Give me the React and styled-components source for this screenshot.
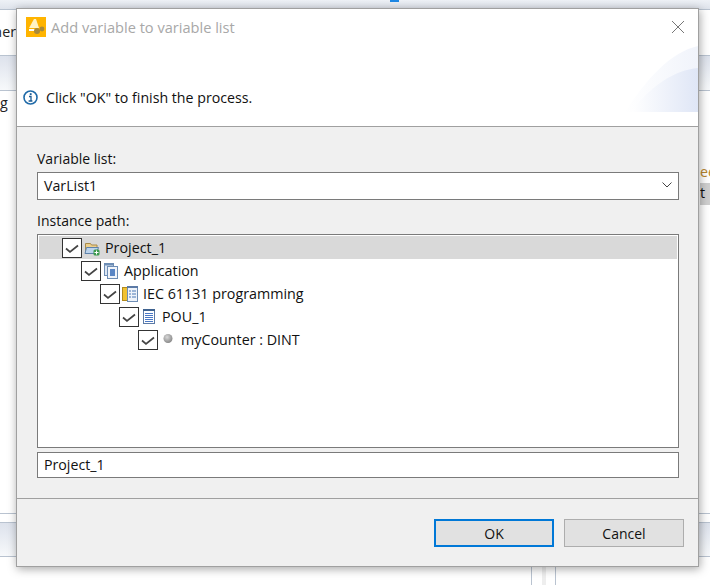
import React from 'react';
import styled, { createGlobalStyle } from 'styled-components';

const GlobalStyle = createGlobalStyle`
  * { box-sizing: border-box; }
  html, body { margin: 0; padding: 0; height: 100%; }
  body { font-family: "Open Sans", "Noto Sans", sans-serif; background: #fff; overflow: hidden; }
`;

const Desktop = styled.div`
  position: relative;
  width: 710px;
  height: 585px;
  overflow: hidden;
  background: #fff;
  display: flex;
  flex-direction: column;
`;

const TopStrip = styled.div`
  position: relative;
  height: 10px;
  flex: none;
  background: linear-gradient(#eef1f6, #dfe4ec);
  border-bottom: 1px solid #b9c3d0;
`;

const Tick = styled.div`
  position: absolute;
  left: 390px;
  top: 0;
  width: 9px;
  height: 2px;
  background: #1e88e5;
`;

const BackRow = styled.div`
  height: ${p => p.$h}px;
  flex: none;
  border-bottom: 1px solid #b9c3d0;
  background: ${p => (p.$tint ? 'linear-gradient(#dde2ec, #f7f9fb)' : '#fff')};
`;

const LeftText = styled.div`
  width: 16px;
  padding-top: 12px;
  display: flex;
  justify-content: flex-end;
  font-size: 14.3px;
  line-height: 20px;
  color: #222;
  white-space: nowrap;
  overflow: hidden;
`;

const BackMiddle = styled.div`
  flex: 1;
  display: flex;
  justify-content: space-between;
  border-bottom: 1px solid #b9c3d0;
`;

const SideLabel = styled.div`
  width: 16px;
  padding-top: 2px;
  font-size: 14.3px;
  line-height: 20px;
  color: #222;
`;

const RightFragments = styled.div`
  width: 10px;
  padding-top: 71px;
  font-size: 14.3px;
  line-height: 20px;
  overflow: hidden;
`;

const OrangeText = styled.div`
  color: #b8862f;
`;

const GreyChip = styled.div`
  height: 22px;
  margin-top: 1px;
  background: #cfcfcf;
  color: #111;
`;

const BackBottom = styled.div`
  height: 28px;
  flex: none;
  display: flex;
  padding-left: 531px;
`;

const Rail = styled.div`
  width: 25px;
  border-left: 1px solid #b9c3d0;
  border-right: 1px solid #b9c3d0;
  display: flex;
  justify-content: center;
`;

const RailGap = styled.div`
  width: 4px;
  background: #eeeeee;
`;

const Dialog = styled.div`
  position: absolute;
  left: 16px;
  top: 8px;
  width: 683px;
  height: 559px;
  border: 1px solid #a0a0a0;
  box-shadow: 1px 2px 9px rgba(0, 0, 0, 0.35);
  display: flex;
  flex-direction: column;
  background: #f0f0f0;
`;

const Header = styled.div`
  position: relative;
  height: 118px;
  flex: none;
  background: #fff;
  border-bottom: 1px solid #a0a0a0;
  overflow: hidden;
`;

const TitleBar = styled.div`
  display: flex;
  align-items: center;
  height: 28px;
  padding: 8px 0 0 9px;
  gap: 5px;
`;

const Title = styled.span`
  font-size: 14.6px;
  line-height: 20px;
  color: #a8a8a8;
`;

const CloseButton = styled.div`
  position: absolute;
  right: 13px;
  top: 11px;
  width: 14px;
  height: 14px;
  display: flex;
  color: #777;
`;

const Message = styled.div`
  display: flex;
  align-items: center;
  gap: 8px;
  margin: 50px 0 0 6px;
  height: 20px;
  font-size: 14.2px;
  color: #111;
`;

const Swoosh = styled.svg`
  position: absolute;
  right: 0;
  bottom: 14px;
`;

const Body = styled.div`
  flex: 1;
  padding: 24px 19px 0 20px;
  display: flex;
  flex-direction: column;
`;

const Label = styled.div`
  font-size: 14px;
  line-height: 16px;
  color: #111;
  margin-bottom: 5px;
`;

const Combo = styled.div`
  height: 28px;
  flex: none;
  border: 1px solid #7a7a7a;
  background: #fff;
  display: flex;
  align-items: center;
  justify-content: space-between;
  padding: 0 6px 2px 6px;
  font-size: 14.2px;
  color: #111;
  margin-bottom: 13px;
`;

const Tree = styled.div`
  height: 214px;
  flex: none;
  border: 1px solid #7a7a7a;
  background: #fff;
  padding: 1px;
  margin-bottom: 4px;
`;

const Row = styled.div`
  display: flex;
  align-items: center;
  height: 23px;
  padding-left: ${p => 23 + p.$level * 19}px;
  background: ${p => (p.$selected ? '#d9d9d9' : 'transparent')};
  font-size: 14.3px;
  color: #111;
`;

const Check = styled.span`
  width: 20px;
  height: 20px;
  border: 1px solid #333;
  background: #fff;
  flex: none;
  margin-right: 2px;
  display: flex;
  align-items: center;
  justify-content: center;
`;

const RowIcon = styled.svg`
  flex: none;
  margin-right: 5px;
`;

const PathField = styled.div`
  height: 26px;
  flex: none;
  border: 1px solid #7a7a7a;
  background: #fff;
  padding: 0 6px;
  font-size: 14.2px;
  line-height: 24px;
  color: #111;
`;

const Footer = styled.div`
  height: 68px;
  flex: none;
  border-top: 1px solid #a0a0a0;
  display: flex;
  justify-content: flex-end;
  gap: 10px;
  padding: 20px 14px 0 0;
`;

const Button = styled.button`
  width: 120px;
  height: 28px;
  background: #e1e1e1;
  border: ${p => (p.$primary ? '2px solid #0078d7' : '1px solid #adadad')};
  font-family: inherit;
  font-size: 14px;
  color: #111;
  padding: 0;
`;

const CheckMark = () => (
  <svg width="18" height="18" viewBox="0 0 18 18">
    <path d="M3 9.500l4 3.500 8-6.500" fill="none" stroke="#444" strokeWidth="1.700" />
  </svg>
);

const FolderIcon = () => (
  <RowIcon width="16" height="16" viewBox="0 0 16 16">
    <path d="M1.500 3.500h5l1 1.500h5.500v8h-11.500z" fill="#eccf8c" stroke="#a88a4a" />
    <path d="M2.500 7.500h12l-2 6h-11.500z" fill="#bcd3ec" stroke="#5f83ab" />
    <rect x="9.500" y="9.500" width="6" height="6" rx="1.500" fill="#3d9a4e" />
    <path d="M12.500 10.500v4M10.500 12.500h4" stroke="#fff" />
  </RowIcon>
);

const AppIcon = () => (
  <RowIcon width="16" height="16" viewBox="0 0 16 16">
    <rect x="1.500" y="0.500" width="9" height="12" fill="#dce6f3" stroke="#6d8db5" />
    <rect x="1.500" y="0.500" width="9" height="2" fill="#6d8db5" />
    <rect x="4.500" y="3.500" width="10" height="12" fill="#f0f4fa" stroke="#6d8db5" />
    <rect x="7" y="6" width="5" height="7" fill="#5a86c5" />
  </RowIcon>
);

const ProgrammingIcon = () => (
  <RowIcon width="16" height="16" viewBox="0 0 16 16">
    <rect x="0.500" y="1.500" width="8" height="13" fill="#f1c232" stroke="#b28a1c" />
    <rect x="5.500" y="0.500" width="10" height="15" fill="#eef3fa" stroke="#6d8db5" />
    <rect x="5" y="0" width="11" height="2" fill="#5b7aa6" />
    <path d="M7 5h2M10 5h4M7 8h2M10 8h4M7 11h2M10 11h4" stroke="#4a78b5" />
  </RowIcon>
);

const PouIcon = () => (
  <RowIcon width="16" height="16" viewBox="0 0 16 16">
    <rect x="2.500" y="0.500" width="11" height="14" fill="#fff" stroke="#5b7aa6" />
    <rect x="2" y="0" width="12" height="2" fill="#3f628f" />
    <path d="M4 4.500h8M4 6.500h8M4 8.500h8M4 10.500h8M4 12.500h8" stroke="#4a78c5" />
  </RowIcon>
);

const DotIcon = () => (
  <RowIcon width="16" height="16" viewBox="0 0 16 16">
    <defs>
      <radialGradient id="dot" cx="40%" cy="35%" r="65%">
        <stop offset="0%" stopColor="#d8d8d8" />
        <stop offset="100%" stopColor="#8a8a8a" />
      </radialGradient>
    </defs>
    <circle cx="8" cy="6.500" r="4.500" fill="url(#dot)" />
  </RowIcon>
);

const rows = [
  { level: 0, label: 'Project_1', icon: <FolderIcon />, selected: true },
  { level: 1, label: 'Application', icon: <AppIcon /> },
  { level: 2, label: 'IEC 61131 programming', icon: <ProgrammingIcon /> },
  { level: 3, label: 'POU_1', icon: <PouIcon /> },
  { level: 4, label: 'myCounter : DINT', icon: <DotIcon /> },
];

export default function App() {
  return (
    <Desktop>
      <GlobalStyle />
      <TopStrip><Tick /></TopStrip>
      <BackRow $h={46}><LeftText>her</LeftText></BackRow>
      <BackRow $h={35} $tint />
      <BackMiddle>
        <SideLabel>g</SideLabel>
        <RightFragments>
          <OrangeText>ee</OrangeText>
          <GreyChip>t</GreyChip>
        </RightFragments>
      </BackMiddle>
      <BackRow $h={9} />
      <BackRow $h={34} $tint />
      <BackBottom>
        <Rail><RailGap /></Rail>
      </BackBottom>

      <Dialog>
        <Header>
          <TitleBar>
            <svg width="20" height="20" viewBox="0 0 20 20">
              <rect width="20" height="20" fill="#ffb400" />
              <path d="M8 2h2l3 9H3z" fill="#fff3c4" />
              <path d="M3 12h8v2H3z" fill="#fff" />
              <circle cx="11" cy="14" r="3" fill="#a98a3a" />
              <circle cx="16" cy="12" r="2.400" fill="#a98a3a" />
            </svg>
            <Title>Add variable to variable list</Title>
          </TitleBar>
          <CloseButton>
            <svg width="14" height="14" viewBox="0 0 14 14">
              <path d="M1 1l12 12M13 1L1 13" stroke="currentColor" fill="none" />
            </svg>
          </CloseButton>
          <Message>
            <svg width="15" height="15" viewBox="0 0 15 15">
              <circle cx="7.500" cy="7.500" r="6.500" fill="#fff" stroke="#1f6aa8" strokeWidth="1.600" />
              <path d="M6 6.500h2v4.300M5.600 11h3.800" stroke="#1c5c94" strokeWidth="1.300" fill="none" />
              <rect x="6.800" y="3.200" width="1.800" height="1.800" fill="#1c5c94" />
            </svg>
            <span>Click "OK" to finish the process.</span>
          </Message>
          <Swoosh width="73" height="66" viewBox="0 0 73 66">
            <defs>
              <linearGradient id="sw" x1="0" x2="1" y1="0" y2="0">
                <stop offset="0%" stopColor="#fff" />
                <stop offset="100%" stopColor="#dfe6f6" />
              </linearGradient>
            </defs>
            <path d="M0 66C20 35 45 6 73 0v66z" fill="url(#sw)" opacity="0.45" />
            <path d="M6 66C25 40 50 24 73 22v44z" fill="url(#sw)" />
          </Swoosh>
        </Header>
        <Body>
          <Label>Variable list:</Label>
          <Combo>
            <span>VarList1</span>
            <svg width="10" height="6" viewBox="0 0 10 6">
              <path d="M0.500 0.500L5 5l4.500-4.500" fill="none" stroke="#444" />
            </svg>
          </Combo>
          <Label>Instance path:</Label>
          <Tree>
            {rows.map(r => (
              <Row key={r.label} $level={r.level} $selected={r.selected}>
                <Check><CheckMark /></Check>
                {r.icon}
                <span>{r.label}</span>
              </Row>
            ))}
          </Tree>
          <PathField>Project_1</PathField>
        </Body>
        <Footer>
          <Button $primary>OK</Button>
          <Button>Cancel</Button>
        </Footer>
      </Dialog>
    </Desktop>
  );
}
